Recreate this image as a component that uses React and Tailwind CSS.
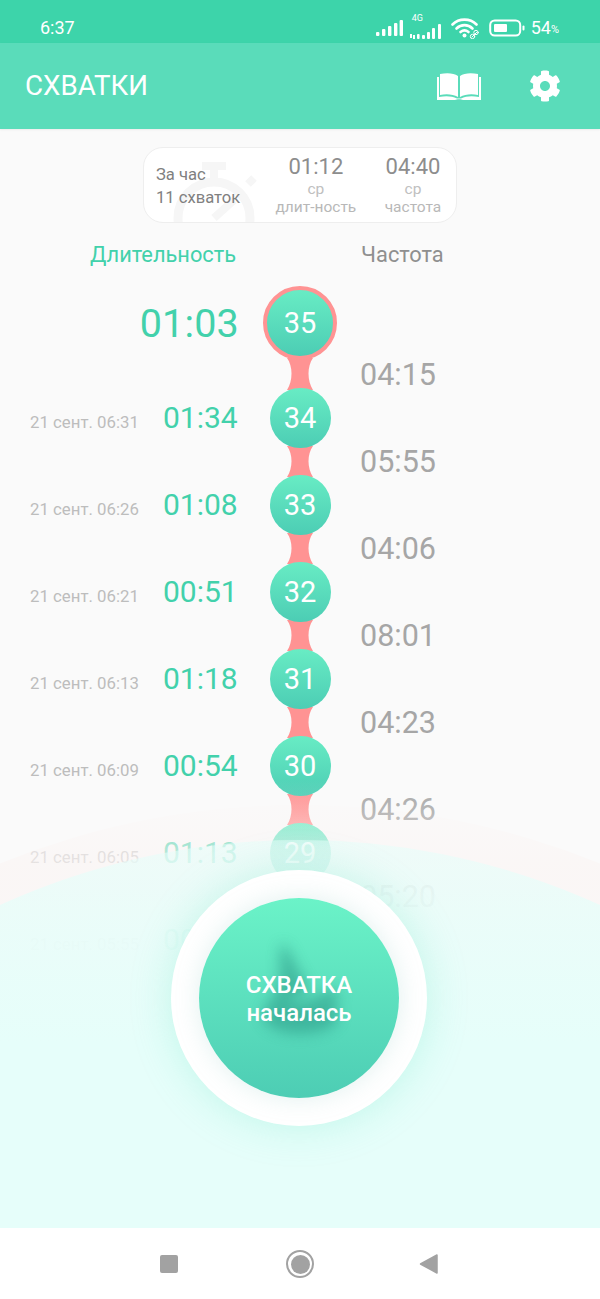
import React from "react";
import { FaCog } from "react-icons/fa";

const font = { fontFamily: "Roboto, 'Noto Sans', sans-serif" };

const rows = [
  { d: "21 сент. 06:31", t: "01:34", n: 34 },
  { d: "21 сент. 06:26", t: "01:08", n: 33 },
  { d: "21 сент. 06:21", t: "00:51", n: 32 },
  { d: "21 сент. 06:13", t: "01:18", n: 31 },
  { d: "21 сент. 06:09", t: "00:54", n: 30 },
  { d: "21 сент. 06:05", t: "01:13", n: 29 },
  { d: "21 сент. 05:55", t: "00:59", n: 28 },
];
const freqs = ["04:15", "05:55", "04:06", "08:01", "04:23", "04:26", "05:20"];

function Signal() {
  return (
    <svg width="28" height="18" viewBox="0 0 28 18" fill="#fff">
      <rect x="1" y="13" width="3.4" height="4" rx="1" />
      <rect x="7" y="10" width="3.4" height="7" rx="1" />
      <rect x="13" y="7" width="3.4" height="10" rx="1" />
      <rect x="19" y="4" width="3.4" height="13" rx="1" />
      <rect x="24.6" y="1" width="3.4" height="16" rx="1" />
    </svg>
  );
}

function StatusBar() {
  return (
    <div className="h-[43px] pt-[12px] bg-[#3dd4aa] flex items-center text-white shrink-0">
      <span className="ml-[40px] text-[18px] leading-none">6:37</span>
      <div className="ml-auto mr-[41px] flex items-center">
        <Signal />
        <div className="relative ml-[6px] w-[35px] h-[24px] flex items-end">
          <span className="absolute left-[3px] top-[-2px] text-[9px] leading-none">4G</span>
          <svg width="35" height="18" viewBox="0 0 35 18" fill="#fff">
            <rect x="1" y="12" width="2" height="4" />
            <rect x="4" y="13" width="2" height="4" />
            <rect x="8" y="12" width="2.6" height="5" rx="1" />
            <rect x="13" y="13" width="3" height="4" rx="1" />
            <rect x="18" y="10" width="3" height="7" rx="1" />
            <rect x="23" y="6" width="3" height="11" rx="1" />
            <rect x="29" y="2" width="3" height="15" rx="1" />
          </svg>
        </div>
        <svg className="ml-[7px]" width="30" height="22" viewBox="0 0 30 22" fill="none" stroke="#fff" strokeLinecap="round">
          <path d="M1.5 7.5 C8 1 19 1 25.5 7.5" strokeWidth="2.6" />
          <path d="M5.5 11.5 C10 7 17 7 21.5 11.5" strokeWidth="2.6" />
          <path d="M9.5 15 C12 13 15 13 17.5 15" strokeWidth="2.6" />
          <circle cx="13.5" cy="18.5" r="2" fill="#fff" stroke="none" />
          <path d="M21 20 L26 15" strokeWidth="1" />
          <circle cx="25" cy="15.5" r="2.2" strokeWidth="1" />
          <circle cx="21.5" cy="19.5" r="2.2" strokeWidth="1" />
        </svg>
        <svg className="ml-[8px]" width="36" height="18" viewBox="0 0 36 18" fill="none">
          <rect x="1.2" y="1.5" width="30" height="15" rx="4.5" stroke="#fff" strokeWidth="2" />
          <rect x="5" y="5" width="13" height="8" rx="1" fill="#fff" />
          <rect x="33.5" y="6.5" width="2" height="5" rx="1" fill="#fff" />
        </svg>
        <span className="ml-[6px] text-[18px] leading-none">54</span>
        <span className="text-[11px] leading-none mt-[4px]">%</span>
      </div>
    </div>
  );
}

function Book() {
  return (
    <svg className="block" width="44" height="28" viewBox="0 0 44 28" fill="#fff">
      <path d="M3 1 C10 -0.5 17 0 21 3 V24 C16 21 9 20.5 3 22 Z" />
      <path d="M41 1 C34 -0.5 27 0 23 3 V24 C28 21 35 20.5 41 22 Z" />
      <path d="M0 4 H2 V24 C9 22.5 15 23 20 25.5 H24 C29 23 35 22.5 42 24 V4 H44 V27 H26 C24 26 20 26 18 27 H0 Z" />
    </svg>
  );
}

function Connector({ tall }) {
  return (
    <svg
      className="block shrink-0 -my-[2px]"
      width="26"
      height={tall ? 32 : 31}
      viewBox="0 0 26 31"
      preserveAspectRatio="none"
      fill="#ff9393"
    >
      <path d="M0 0 H26 C20 8 20 22 26 31 H0 C6 22 6 8 0 0 Z" />
    </svg>
  );
}

function Stats() {
  return (
    <div className="relative mx-auto mt-[18px] w-[314px] h-[76px] rounded-[20px] border border-[#eeeeee] bg-white overflow-hidden flex shrink-0">
      <svg className="absolute left-[20px] top-[12px]" width="100" height="90" viewBox="0 0 100 90" fill="none" stroke="#f6f6f6" strokeWidth="8">
        <circle cx="50" cy="58" r="36" strokeWidth="9" />
        <path d="M50 22 V8 M38 6 H62" />
        <path d="M84 24 L90 18" />
        <path d="M50 58 L70 40" />
      </svg>
      <div className="relative pl-[12px] pt-[15px] w-[130px] text-[#808080] text-[16.6px] leading-[23px]">
        <div>За час</div>
        <div className="whitespace-nowrap">11 схваток</div>
      </div>
      <div className="relative w-[90px] ml-[4px] flex flex-col items-center pt-[6px]">
        <span className="text-[22px] leading-[26px] text-[#8d8d8d]">01:12</span>
        <span className="text-[15.5px] leading-[17px] text-[#c0c0c0] mt-[1px]">ср</span>
        <span className="text-[15.5px] leading-[18px] text-[#b8b8b8] whitespace-nowrap">длит-ность</span>
      </div>
      <div className="relative w-[90px] ml-[11px] flex flex-col items-center pt-[6px]">
        <span className="text-[22px] leading-[26px] text-[#8d8d8d]">04:40</span>
        <span className="text-[15.5px] leading-[17px] text-[#c0c0c0] mt-[1px]">ср</span>
        <span className="text-[15.5px] leading-[18px] text-[#b8b8b8]">частота</span>
      </div>
    </div>
  );
}

function Timeline() {
  return (
    <div className="flex mt-[18px]">
      <div className="w-[269px] shrink-0">
        <div className="h-[74px] mb-[28px] pt-[1px] flex items-center justify-end pr-[30px]">
          <span className="text-[39.5px] leading-none text-[#42d1ab] tracking-[0.2px]">01:03</span>
        </div>
        {rows.map((r) => (
          <div key={r.n} className="h-[60px] mb-[27px] pt-[2px] flex items-center pl-[30px]">
            <div className="flex items-baseline">
              <span className="w-[133px] text-[16.8px] text-[#bdbdbd] whitespace-nowrap">{r.d}</span>
              <span className="text-[30px] leading-none text-[#42d1ab]">{r.t}</span>
            </div>
          </div>
        ))}
      </div>
      <div className="w-[62px] shrink-0 flex flex-col items-center">
        <div className="relative w-[74px] h-[74px] pt-[1px] shrink-0 rounded-full border-[4px] border-[#ff9393] bg-gradient-to-b from-[#68ecc4] to-[#4ccdb4] flex items-center justify-center text-white text-[29px]">
          35
        </div>
        <Connector tall />
        {rows.map((r, i) => (
          <React.Fragment key={r.n}>
            <div className="relative w-[61px] h-[60px] pt-[2px] shrink-0 rounded-full bg-gradient-to-b from-[#68ecc4] to-[#4ccdb4] flex items-center justify-center text-white text-[29px]">
              {r.n}
            </div>
            {i < rows.length - 1 && <Connector />}
          </React.Fragment>
        ))}
      </div>
      <div className="pl-[29px] pt-[46px]">
        {freqs.map((f) => (
          <div key={f} className="h-[87px] flex items-center text-[30.5px] leading-none text-[#a6a6a6]">
            {f}
          </div>
        ))}
      </div>
    </div>
  );
}

function StartButton() {
  return (
    <div className="absolute left-[171px] top-[870px] w-[256px] h-[256px] rounded-full bg-white shadow-[0_0_40px_rgba(95,225,195,0.28)] flex items-center justify-center">
      <div className="relative w-[200px] h-[200px] rounded-full bg-gradient-to-b from-[#6bf3c8] to-[#4dcdb4] shadow-[0_0_24px_rgba(120,190,180,0.22)] overflow-hidden flex flex-col items-center justify-center text-white">
        <svg className="absolute left-[35px] top-[38px] opacity-60 blur-[7px]" width="130" height="120" viewBox="0 0 120 110" fill="#2f9d8a">
          <path d="M44 6 C52 12 56 26 62 36 C70 46 70 54 60 54 C50 58 48 62 58 62 C72 62 80 52 88 50 C98 48 100 58 92 62 C100 76 96 84 78 88 C60 92 36 90 26 76 C26 66 34 60 38 52 C46 40 40 20 44 6 Z" />
        </svg>
        <span className="relative text-[24px] leading-[28px] font-medium mt-[1px]">СХВАТКА</span>
        <span className="relative text-[24px] leading-[28px] font-medium">началась</span>
      </div>
    </div>
  );
}

export default function App() {
  return (
    <div className="relative w-[600px] h-[1299px] overflow-hidden bg-[#fafafa] flex flex-col" style={font}>
      <StatusBar />
      <div className="h-[86px] shrink-0 bg-[#5adcba] flex items-center text-white shadow-[0_1px_2px_rgba(0,0,0,0.06)]">
        <span className="ml-[25px] text-[27.7px] leading-none">СХВАТКИ</span>
        <div className="ml-auto mr-[48px] mt-[2px]"><Book /></div>
        <FaCog className="mr-[39px] text-[32px]" />
      </div>
      <Stats />
      <div className="flex mt-[19px] h-[26px] items-center shrink-0">
        <span className="ml-[90px] text-[21.8px] leading-none text-[#42d1ab]">Длительность</span>
        <span className="ml-[125px] text-[21.8px] leading-none text-[#8f8f8f]">Частота</span>
      </div>
      <Timeline />

      <div className="absolute left-0 right-0 top-[780px] h-[260px] bg-[linear-gradient(to_bottom,rgba(250,250,250,0)_0%,rgba(250,250,250,0.2)_12%,rgba(250,250,250,0.6)_28%,rgba(250,250,250,0.75)_45%,rgba(250,250,250,0.8)_65%,#fafafa_100%)]" />
      <div className="absolute left-[-500px] top-[805px] w-[1600px] h-[1600px] rounded-full bg-[linear-gradient(to_bottom,rgba(255,205,195,0.02),rgba(255,205,195,0.08)_4%,rgba(255,205,195,0.08))]" />
      <div className="absolute left-[-425px] top-[840px] w-[1450px] h-[1450px] rounded-full bg-[linear-gradient(to_bottom,rgba(230,254,250,0.55),rgba(230,254,250,0.72)_4%,rgba(230,254,250,0.82)_7%,#e6fefa_14%)]" />
      <StartButton />

      <div className="absolute left-0 right-0 top-[1228px] h-[71px] bg-white flex items-center">
        <div className="ml-[160px] w-[18px] h-[18px] rounded-[2px] bg-[#a2a2a2] mt-[1px]" />
        <div className="ml-[108px] w-[28px] h-[28px] rounded-full border-[2.5px] border-[#a2a2a2] flex items-center justify-center mt-[1px]">
          <div className="w-[19px] h-[19px] rounded-full bg-[#a2a2a2]" />
        </div>
        <svg className="ml-[105px] mt-[1px]" width="20" height="22" viewBox="0 0 20 22" fill="#a2a2a2" stroke="#a2a2a2" strokeLinejoin="round" strokeWidth="1.5">
          <path d="M1.5 11 L18 2 V20 Z" />
        </svg>
      </div>
    </div>
  );
}
